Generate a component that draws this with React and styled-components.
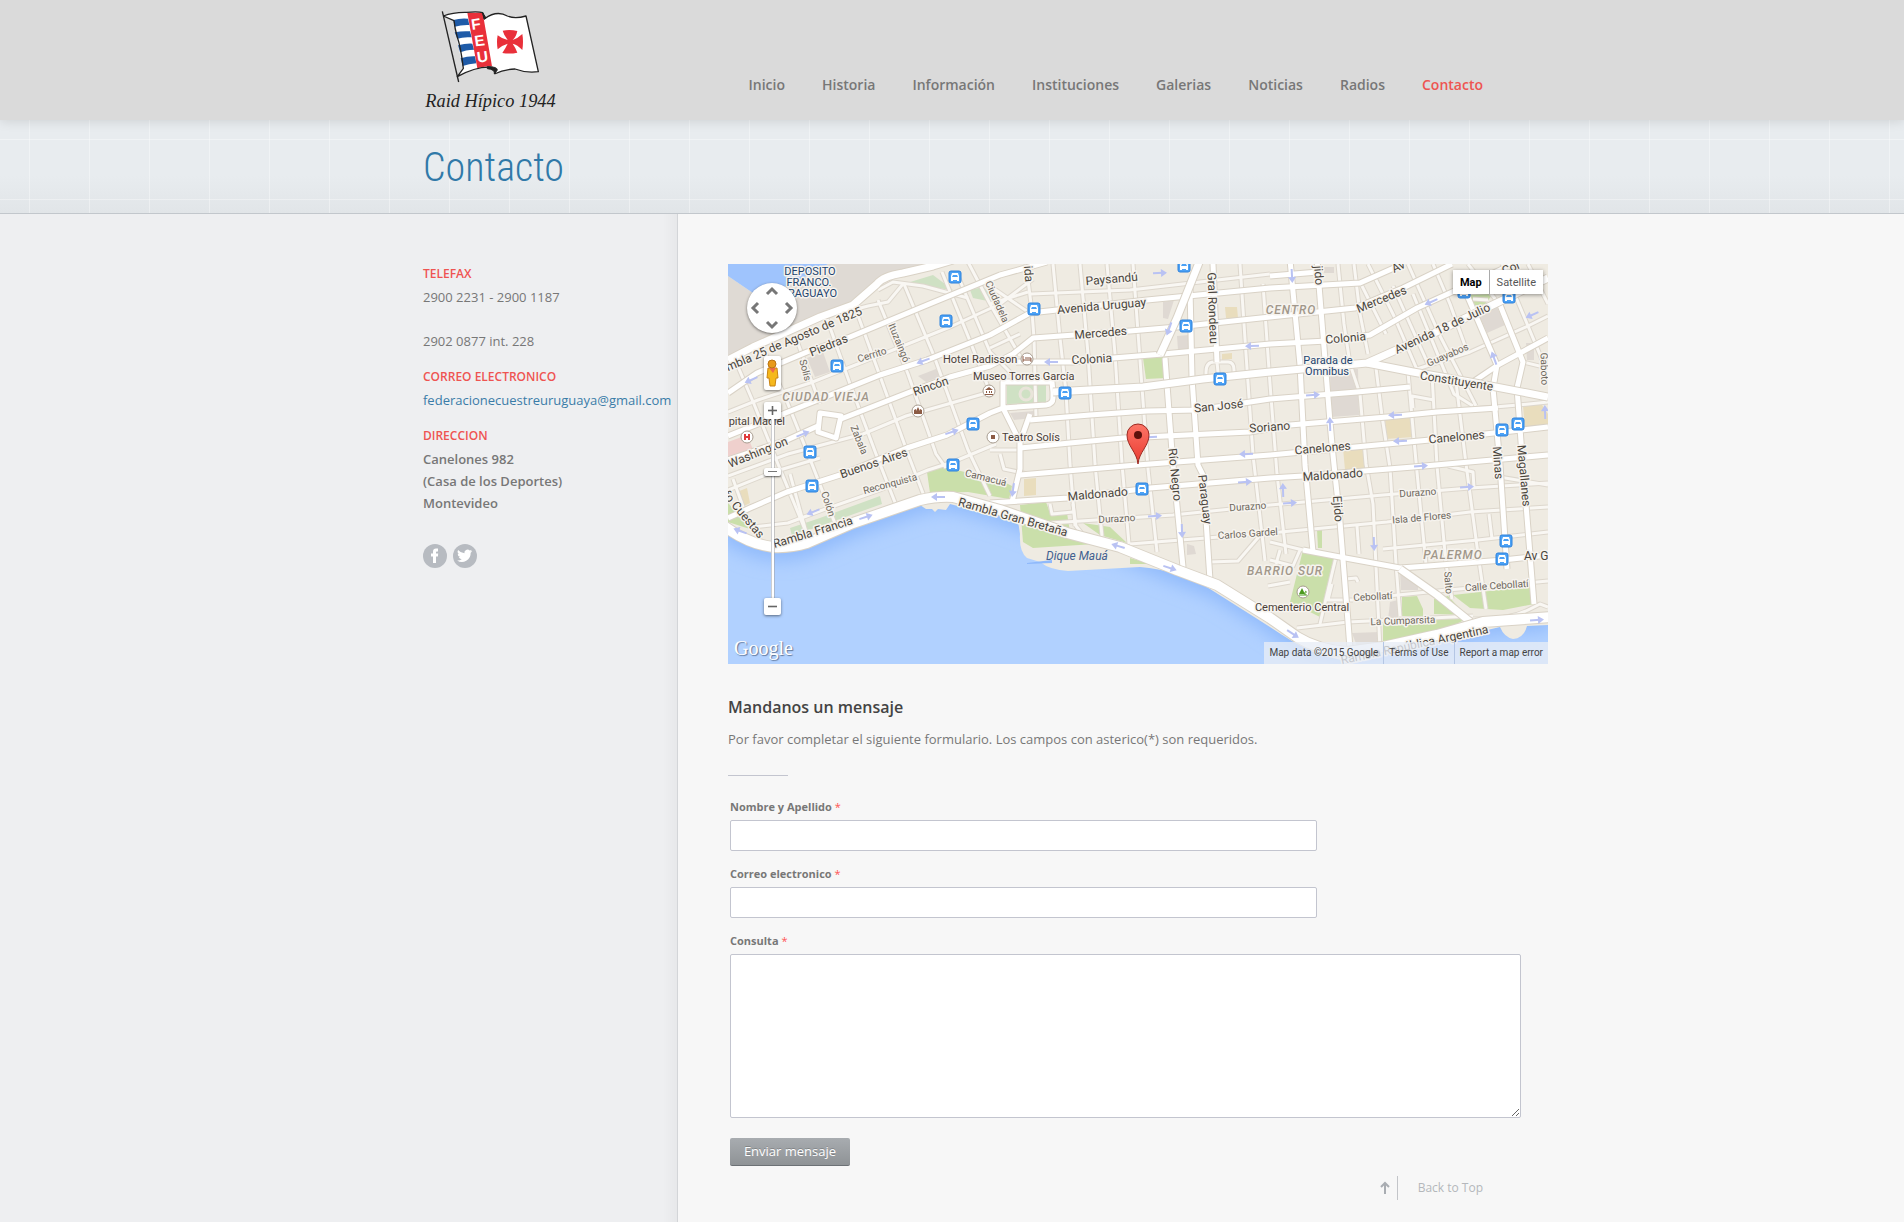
import React from "react";
import styled, { createGlobalStyle, css } from "styled-components";

const GlobalStyle = createGlobalStyle`
  * { box-sizing: border-box; }
  body {
    margin: 0;
    background: #f7f7f7;
    color: #777;
    font-family: "Open Sans", "Noto Sans", sans-serif;
    font-size: 13px;
    line-height: 22px;
  }
  a { color: inherit; text-decoration: none; }
  h1, h2, h3, p, address { margin: 0; font-style: normal; }
`;

const Page = styled.div`
  min-height: 100vh;
  display: flex;
  flex-direction: column;
`;

const Header = styled.header`
  position: relative;
  height: 120px;
  background: #dadada;
  box-shadow: 0 0 12px rgba(0, 0, 0, 0.14);
`;

const Container = styled.div`
  width: 100%;
  max-width: 1062px;
  margin: 0 auto;
  padding-left: 2px;
  display: flex;
  justify-content: space-between;
`;

const LogoLink = styled.a`
  display: block;
  padding-top: 6px;
  svg { display: block; }
`;

const Nav = styled.nav`
  display: flex;
  gap: 37px;
  padding-top: 74px;
`;

const NavLink = styled.a`
  font-size: 14px;
  font-weight: 600;
  color: ${(p) => (p.$active ? "#ee5451" : "#777")};
`;

const TitleBand = styled.section`
  height: 94px;
  border-bottom: 1px solid #c2c7cc;
  background:
    linear-gradient(90deg, rgba(255, 255, 255, 0.35) 1px, transparent 1px) 29px 0 / 60px 60px,
    linear-gradient(rgba(255, 255, 255, 0.35) 1px, transparent 1px) 0 19px / 60px 60px,
    linear-gradient(#e8ecef 60%, #e1e5e8);
`;

const PageTitle = styled.h1`
  padding-top: 23px;
  font-family: "Roboto Condensed", Roboto, sans-serif;
  font-size: 40px;
  line-height: 50px;
  font-weight: 300;
  color: #3079a8;
`;

const Columns = styled.div`
  flex: 1;
  display: grid;
  grid-template-columns: calc(50% - 274px) minmax(0, 1fr);
`;

const Sidebar = styled.aside`
  display: flex;
  justify-content: flex-end;
  padding-top: 49px;
  border-right: 1px solid #d3d5d8;
  background: linear-gradient(270deg, #e7e8ea, #eeeff1 14px);
`;

const SidebarInner = styled.div`
  width: 254px;
`;

const SideTitle = styled.h3`
  font-size: 12px;
  line-height: 22px;
  font-weight: 600;
  color: #ee5451;
  margin: 0 0 1px;
`;

const SideText = styled.p`
  margin-bottom: 14px;
  font-weight: ${(p) => (p.$strong ? 600 : 400)};
  color: ${(p) => (p.$link ? "#3a7ca8" : "#777")};
`;

const Socials = styled.div`
  display: flex;
  gap: 6px;
  padding-top: 16px;
  svg { display: block; }
`;

const Main = styled.main`
  padding: 50px 0 0 50px;
`;

const MapBox = styled.div`
  position: relative;
  width: 100%;
  max-width: 820px;
  height: 400px;
  overflow: hidden;
  font-family: Roboto, sans-serif;
`;

const MapDrawing = styled.svg`
  display: block;
  width: 100%;
  height: 100%;
  font-family: Roboto, sans-serif;
`;

const controlFace = css`
  border: 0;
  padding: 0;
  background: #fff;
  box-shadow: 0 1px 3px rgba(0, 0, 0, 0.5);
  display: grid;
  place-items: center;
`;

const MapControls = styled.div`
  position: absolute;
  top: 19px;
  left: 19px;
  width: 50px;
  display: flex;
  flex-direction: column;
  align-items: center;
`;

const PanPad = styled.div`
  ${controlFace}
  width: 50px;
  height: 50px;
  border-radius: 50%;
  grid-template-columns: repeat(3, 16px);
  grid-template-rows: repeat(3, 16px);
  place-content: center;
  margin-bottom: 23px;
`;

const PanButton = styled.button`
  grid-area: ${(p) => p.$area};
  width: 16px;
  height: 16px;
  padding: 0;
  border: 0;
  background: none;
  svg { display: block; }
`;

const Pegman = styled.button`
  ${controlFace}
  width: 17px;
  height: 34px;
  border-radius: 2px;
  margin-bottom: 12px;
`;

const ZoomButton = styled.button`
  ${controlFace}
  width: 17px;
  height: 17px;
  border-radius: 2px;
`;

const ZoomRange = styled.input`
  appearance: none;
  writing-mode: vertical-lr;
  direction: rtl;
  width: 17px;
  height: 179px;
  margin: 0;
  background: linear-gradient(90deg, transparent 7px, #9b9da3 7px, #fff 8px, #fff 10px, #9b9da3 10px, transparent 11px);
  &::-webkit-slider-thumb {
    appearance: none;
    width: 17px;
    height: 8px;
    border-radius: 2px;
    background: linear-gradient(#777, #777) center / 9px 1px no-repeat, #fff;
    box-shadow: 0 1px 2px rgba(0, 0, 0, 0.6);
  }
`;

const MapTypes = styled.div`
  position: absolute;
  top: 6px;
  right: 5px;
  display: flex;
  box-shadow: 0 1px 4px rgba(0, 0, 0, 0.4);
`;

const MapType = styled.button`
  height: 24px;
  padding: 0 7px;
  border: 0;
  border-left: ${(p) => (p.$active ? "0" : "1px solid #aaa")};
  background: #fff;
  font: ${(p) => (p.$active ? 700 : 400)} 11px Roboto, sans-serif;
  color: ${(p) => (p.$active ? "#000" : "#565656")};
`;

const Brand = styled.a`
  position: absolute;
  left: 6px;
  bottom: 3px;
  font-family: "Liberation Serif", serif;
  font-size: 20px;
  line-height: 26px;
  color: #fff;
  text-shadow: 1px 1px 1px rgba(60, 80, 110, 0.7);
`;

const Credits = styled.div`
  position: absolute;
  right: 0;
  bottom: 0;
  display: flex;
  background: rgba(232, 237, 246, 0.78);
  font-size: 10px;
  color: #444;
`;

const Credit = styled.a`
  padding: 0 5px;
  border-left: ${(p) => (p.$first ? "0" : "1px solid #b4c6e4")};
`;

const FormTitle = styled.h2`
  margin-top: 32px;
  font-size: 16px;
  line-height: 22px;
  font-weight: 600;
  color: #444;
`;

const Intro = styled.p`
  margin-top: 10px;
`;

const Rule = styled.hr`
  width: 60px;
  height: 1px;
  margin: 25px 0 21px;
  border: 0;
  background: #c3c5cf;
`;

const Form = styled.form`
  padding: 0 2px;
`;

const Field = styled.div`
  margin-bottom: 13px;
`;

const Label = styled.label`
  display: block;
  padding-bottom: 3px;
  font-size: 11px;
  line-height: 20px;
  font-weight: 700;
  span { color: #f55; font-weight: 400; }
`;

const fieldFace = css`
  display: block;
  width: 100%;
  padding: 6px 8px;
  border: 1px solid #c3c5cf;
  border-radius: 2px;
  background: #fff;
  font: inherit;
  color: #777;
`;

const Input = styled.input`
  ${fieldFace}
  max-width: 587px;
  height: 31px;
`;

const TextArea = styled.textarea`
  ${fieldFace}
  max-width: 791px;
  height: 164px;
`;

const Submit = styled.button`
  display: block;
  width: 120px;
  height: 28px;
  margin-top: 20px;
  padding: 0 0 2px;
  border: 0;
  border-bottom: 1px solid #6c7175;
  border-radius: 2px;
  background: linear-gradient(#a8acb0, #8f9396);
  color: #fff;
  font: 13px "Open Sans", sans-serif;
  text-shadow: 0 -1px 0 rgba(0, 0, 0, 0.2);
`;

const Bottom = styled.div`
  max-width: 755px;
  display: flex;
  justify-content: flex-end;
  padding-top: 10px;
`;

const BackToTop = styled.a`
  display: flex;
  align-items: center;
  font-size: 12px;
  line-height: 24px;
  color: #b4b7bb;
  span {
    margin-left: 6px;
    padding-left: 20px;
    border-left: 1px solid #c3c5c9;
  }
`;

/* ---------- map data (820 x 400 canvas) ---------- */

const GREENS = [
  "415,94 435,93 438,114 418,115",
  "742,31 765,30 757,40 745,42",
  "575,286 606,293 592,353 562,338",
  "589,266 594,266 594,284 590,284",
  "674,333 689,332 695,345 695,352 674,352",
  "655,358 740,354 709,370 655,382",
  "706,335 720,332 738,351 706,350",
  "725,331 806,322 806,340 775,346 742,344",
  "292,241 318,238 322,249 339,249 342,268 382,279 305,284 295,278",
  "355,259 382,263 399,279 372,271",
  "402,294 422,300 402,300",
  "199,208 215,203 272,216 284,222 281,235 240,228 202,229",
  "0,239 25,266 0,258",
];
const PALE_GREENS = [
  "62,264 92,254 152,232 154,240 64,272",
  "179,19 205,11 225,26 192,22",
  "242,26 255,23 274,40 245,34",
  "279,121 318,120 318,139 279,140",
];
const GREYS = [
  "79,94 95,88 102,108 87,113",
  "752,53 769,43 777,61 759,69",
  "602,106 630,105 631,151 603,153",
  "190,112 208,105 214,112 198,118",
  "435,38 446,36 440,55 435,54",
  "449,72 461,71 462,85 450,86",
  "672,308 690,320 690,326 673,326",
  "624,369 652,368 652,390 630,385",
  "282,149 306,147 306,154 286,156",
  "662,338 670,336 670,356 660,356",
  "596,3 606,3 606,9 596,9",
  "459,280 466,282 468,290 459,291",
  "798,79 806,79 806,96 799,96",
];
const TANS = [
  "657,154 683,153 685,173 658,175",
  "795,142 812,138 820,150 820,163 797,165",
  "615,184 635,183 637,205 617,206",
  "9,228 19,224 22,239 14,243",
  "497,43 509,43 510,54 498,54",
  "296,215 308,214 308,231 296,232",
  "494,90 504,89 504,95 494,96",
];

const MINOR = [
  "M0,148 L30,136 L82,119 L150,92 L222,63 L272,40 L305,15",
  "M0,212 L60,190 L135,170 L178,152 L262,128",
  "M0,226 L45,208 L92,194",
  "M25,263 L60,259 L92,247 L152,226 L200,206 L225,198 L268,180",
  "M150,26 L165,18 L195,22 L240,34",
  "M110,50 L140,42 L160,38 L175,20",
  "M8,98 L26,140 L52,205 L78,268",
  "M35,84 L58,135 L82,195 L108,262",
  "M68,74 L92,140",
  "M98,52 L122,120 L148,190 L170,246",
  "M128,46 L152,112 L180,190 L196,232",
  "M150,36 L180,110 L208,190 L218,204",
  "M176,20 L206,92 L240,186 L262,232",
  "M214,8 L240,72 L262,128",
  "M230,12 L262,88 L284,110",
  "M240,-2 L262,40 L292,92",
  "M262,22 L300,48",
  "M262,40 L300,28",
  "M262,84 L292,70",
  "M298,0 L304,48 L306,74 L308,154",
  "M5,215 L22,262",
  "M62,210 L78,268",
  "M325,0 L332,74 L338,128 L342,200 L347,262",
  "M352,0 L360,90 L367,200 L374,272",
  "M379,0 L387,90 L394,200 L401,280",
  "M405,0 L412,96 L420,205 L429,288",
  "M489,98 L491,118",
  "M512,0 L518,90 L525,191 L537,297",
  "M535,20 L542,120 L549,210 L558,290",
  "M303,30 L402,26 L542,10",
  "M322,259 L445,251 L542,241 L655,231 L742,224 L820,219",
  "M402,280 L542,269 L659,258 L742,248 L820,243",
  "M482,298 L510,297 L535,268",
  "M322,240 L324,250 L345,248",
  "M345,240 L348,262 L356,272",
  "M478,118 L478,108 Q478,98 486,98 L500,98 Q506,98 506,106 L506,112",
  "M610,0 L616,60 L622,100 L632,130 L638,200 L645,240 L652,385",
  "M626,0 L632,50 L640,90",
  "M632,18 L658,70",
  "M640,0 L666,52 L690,108",
  "M665,22 L700,100",
  "M685,30 L726,130 L745,142",
  "M680,0 L712,72 L748,142",
  "M705,0 L722,40 L740,90",
  "M648,104 L654,152 L662,204 L668,300 L672,352",
  "M680,108 L686,176 L692,240 L698,300",
  "M704,110 L709,202 L718,300 L724,335",
  "M728,118 L738,200 L750,290 L758,345",
  "M685,144 L684,132 L706,136",
  "M689,105 L742,88 L800,62 L820,52",
  "M740,0 L775,45",
  "M774,0 L800,62 L820,110",
  "M800,0 L820,40",
  "M745,35 L760,36",
  "M542,278 L575,286",
  "M542,296 L565,302 L572,286",
  "M552,286 L548,300",
  "M562,318 L540,322",
  "M608,293 L592,360",
  "M625,336 L600,336 L604,320",
  "M618,315 L628,314 L630,318",
  "M569,364 L620,358 L745,352",
  "M650,333 L720,326 L820,317",
  "M655,285 L750,276 L820,268",
  "M761,250 L764,275",
  "M745,355 Q780,356 800,346 L812,340 L820,343",
  "M629,262 L631,290",
  "M709,148 L790,141 L820,138",
  "M795,98 L820,104",
  "M720,202 L745,208 L746,224",
  "M765,212 L820,221",
  "M262,186 L292,186",
  "M272,190 L276,205 L300,210",
];

const MAJOR = [
  "M0,129 L29,109 L79,88 L122,73 L199,41 L272,11 L319,-2",
  "M0,172 L85,138 L152,111 L199,96 L262,71 L302,49 L419,36 L542,24 L632,19 L675,0",
  "M0,196 L59,176 L92,161 M113,155 L182,128 L222,113 L262,102 L285,90 L305,74 L402,67 L449,63 L542,53 L627,44 L675,24 L724,0",
  "M0,254 L22,244 L59,228 L112,211 L179,184 L219,171 L262,149 L275,144 L318,141 Q325,140 325,134 L325,128 L324,118 L275,118 L275,144",
  "M288,98 L345,98 L385,94 L435,90 L542,80 L599,77 L642,71 L689,44 L755,14 L785,0",
  "M275,144 L292,178 L292,205 L284,238",
  "M302,150 L292,178",
  "M302,156 L362,151 L419,147 L469,146 L542,135 L629,128 L682,123",
  "M292,184 L342,179 L395,174 L522,168 L562,161 L659,153 L709,148 L770,144",
  "M292,211 L409,201 L542,191 L702,176 L820,163",
  "M262,239 L292,237 L340,234 L422,224 L542,214 L575,212 L685,203 L820,191",
  "M462,24 L464,114 L470,201 L475,211 L482,316",
  "M485,0 L489,98",
  "M437,94 L445,201 L455,303",
  "M589,-4 L591,21 L602,158 L605,191 L612,258 L620,358 L622,385",
  "M562,-4 L572,101 L577,201 L585,288",
  "M739,31 L769,101 L765,124 L772,201 L779,305",
  "M772,41 L795,98 L789,124 L794,191 L806,340",
  "M742,120 L770,101 L820,74",
  "M575,286 L612,293 L672,304 L700,302 L775,296 L820,291",
  "M542,12 L590,8",
  "M92,149 L113,152 L108,174 L90,168 Z",
];

const TRUNK = [
  "M0,96 L25,83 L92,53 L125,41 L149,20 Q155,12 175,9 L205,2 L225,-4",
  "M472,-4 L449,54 L432,91",
  "M325,128 L415,123 L475,115 L542,108 L639,99 L702,71 L775,36 L820,14",
  "M639,99 L685,108 L742,118 L820,133",
  "M672,305 L709,331 L745,360",
];

const COAST_ROAD =
  "M-4,262 Q20,280 45,283 Q62,284 79,279 L125,259 L192,236 Q210,232 225,233 L272,246 L339,269 L392,283 L449,306 L489,321 L542,354 L569,373 Q590,386 619,388 L655,383 L709,371 L755,358 L824,353";

const BUS = [
  [227, 13], [218, 57], [109, 102], [245, 160], [82, 188], [225, 201], [84, 222],
  [456, 2], [306, 45], [458, 62], [337, 129], [492, 115], [736, 28], [781, 33],
  [774, 166], [790, 160], [414, 225], [778, 277], [774, 295],
];

const ARROWS = [
  [23, 116, 156], [75, 170, -22], [195, 97, 160], [224, 168, -18], [432, 9, -3],
  [441, 65, 110], [323, 98, 180], [524, 82, 178], [518, 190, 177], [422, 173, 177],
  [564, 12, 87], [703, 38, 156], [804, 51, 156], [766, 94, -110], [585, 131, -4],
  [667, 151, 177], [602, 160, -92], [672, 177, 177], [817, 148, -92], [12, 267, 200],
  [85, 248, 158], [138, 253, -18], [210, 233, 180], [285, 226, 98], [517, 218, -4],
  [427, 252, -4], [454, 267, 88], [390, 282, 197], [442, 304, 18], [555, 226, -92],
  [562, 239, -4], [693, 202, -4], [739, 223, -4], [646, 280, 88], [565, 370, 33], [809, 356, -4],
];

const STYLES = {
  street: { size: 12, fill: "#4a453c" },
  minor: { size: 10, fill: "#6d675c" },
  poi: { size: 11, fill: "#4a4038" },
  place: { size: 11, fill: "#22446f" },
  area: { size: 12, fill: "#a1978a", spacing: 1, italic: true },
  water: { size: 12, fill: "#41608f", italic: true },
};

/* text, x, y, rotation, style, anchor */
const LABELS = [
  ["DEPOSITO", 82, 11, 0, "place"],
  ["FRANCO.", 81, 22, 0, "place"],
  ["RAGUAYO", 109, 33, 0, "place", "end"],
  ["mbla 25 de Agosto de 1825", 135, 50, -23, "street", "end"],
  ["Piedras", 102, 85, -22, "street"],
  ["Cerrito", 145, 94, -18, "minor"],
  ["Ituzaingó", 168, 80, 68, "minor"],
  ["Solís", 74, 107, 75, "minor"],
  ["CIUDAD VIEJA", 98, 137, 0, "area"],
  ["Rincón", 204, 126, -19, "street"],
  ["Hotel Radisson", 215, 99, 0, "poi", "start"],
  ["Museo Torres García", 245, 116, 0, "poi", "start"],
  ["pital Maciel", 57, 161, 0, "poi", "end"],
  ["Washington", 2, 204, -22, "street", "start"],
  ["Buenos Aires", 147, 203, -19, "street"],
  ["Zabala", 128, 177, 68, "minor"],
  ["Reconquista", 163, 223, -15, "minor"],
  ["Colón", 97, 241, 72, "minor"],
  ["fo Cuestas", 31, 275, 50, "street", "end"],
  ["Rambla Francia", 86, 272, -17, "street"],
  ["Rambla Gran Bretaña", 284, 257, 16, "street"],
  ["Camacuá", 257, 217, 14, "minor"],
  ["Ciudadela", 266, 39, 66, "minor"],
  ["ida", 296, 2, 86, "street", "start"],
  ["Paysandú", 384, 19, -5, "street"],
  ["Avenida Uruguay", 374, 46, -5, "street"],
  ["Mercedes", 373, 73, -5, "street"],
  ["Colonia", 364, 99, -3, "street"],
  ["Teatro Solís", 274, 177, 0, "poi", "start"],
  ["Gral Rondeau", 482, 80, 88, "street", "end"],
  ["San José", 491, 146, -6, "street"],
  ["Soriano", 542, 167, -4, "street"],
  ["Río Negro", 443, 211, 84, "street"],
  ["Paraguay", 473, 236, 83, "street"],
  ["Maldonado", 370, 234, -5, "street"],
  ["Durazno", 389, 258, -3, "minor"],
  ["Durazno", 520, 246, -4, "minor"],
  ["Carlos Gardel", 520, 273, -4, "minor"],
  ["BARRIO SUR", 557, 311, 0, "area"],
  ["Cementerio Central", 574, 347, 0, "poi"],
  ["Dique Mauá", 349, 296, 0, "water"],
  ["jido", 586, 2, 86, "street", "start"],
  ["CENTRO", 563, 50, 0, "area"],
  ["Mercedes", 655, 39, -22, "street"],
  ["Colonia", 618, 78, -5, "street"],
  ["Av", 666, 9, -25, "street", "start"],
  ["Avenida 18 de Julio", 716, 68, -25, "street"],
  ["Col", 776, 11, -23, "street", "start"],
  ["Guayabos", 721, 94, -23, "minor"],
  ["Constituyente", 728, 121, 9, "street"],
  ["Gaboto", 813, 105, 88, "minor"],
  ["Parada de", 600, 100, 0, "place"],
  ["Omnibus", 599, 111, 0, "place"],
  ["Canelones", 729, 177, -5, "street"],
  ["Canelones", 595, 188, -5, "street"],
  ["Maldonado", 605, 215, -4, "street"],
  ["Durazno", 690, 232, -4, "minor"],
  ["Isla de Flores", 694, 257, -5, "minor"],
  ["Ejido", 606, 245, 86, "street"],
  ["Minas", 766, 199, 86, "street"],
  ["Magallanes", 792, 212, 85, "street"],
  ["PALERMO", 725, 295, 0, "area"],
  ["Av G", 796, 296, 0, "street", "start"],
  ["Salto", 717, 319, 86, "minor"],
  ["Calle Cebollatí", 769, 325, -4, "minor"],
  ["Cebollatí", 645, 336, -3, "minor"],
  ["La Cumparsita", 675, 360, -2, "minor"],
  ["Rambla República Argentina", 761, 369, -12, "street", "end"],
];

const Polys = ({ items, fill }) => items.map((p) => <polygon key={p} points={p} fill={fill} />);

const Roads = ({ items, width, fill = "#fff", edge = "#d9d2c6" }) => (
  <g fill="none" strokeLinejoin="round">
    {items.map((d) => <path key={d} d={d} stroke={edge} strokeWidth={width + 2} />)}
    {items.map((d) => <path key={d + "f"} d={d} stroke={fill} strokeWidth={width} />)}
  </g>
);

const Poi = ({ x, y, children }) => (
  <g transform={`translate(${x} ${y})`}>
    <circle r="6" fill="#fff" stroke="#a89d90" />
    {children}
  </g>
);

const CityMap = () => (
  <MapDrawing viewBox="0 0 820 400" preserveAspectRatio="xMidYMid slice" role="img" aria-label="Mapa de Montevideo">
    <defs>
      <filter id="shore" x="-10%" y="-10%" width="120%" height="120%">
        <feGaussianBlur stdDeviation="9" />
      </filter>
      <linearGradient id="pin" x1="0" y1="0" x2="0" y2="1">
        <stop offset="0" stopColor="#fd7567" />
        <stop offset="1" stopColor="#e93a30" />
      </linearGradient>
    </defs>
    <rect width="820" height="400" fill="#b1d1ff" />
    <path d={COAST_ROAD} fill="none" stroke="#8fb9fb" strokeWidth="26" filter="url(#shore)" />
    <path
      fill="#efebe2"
      d="M0,0 L820,0 L820,361 L799,362 Q796,374 785,375 Q776,373 772,363 L709,378 L652,392 Q629,402 605,394 Q585,392 542,363 L482,325 Q449,306 412,303 L340,307 Q322,306 312,298 L299,294 Q291,288 292,270 L290,257 Q272,249 245,246 L222,240 L218,246 L210,245 L207,248 L204,245 L198,245 L192,241 L159,249 L125,263 L78,283 Q52,291 22,282 L0,271 Z"
    />
    <path d="M299,299 L324,296 L324,299 L299,300 Z" fill="#8fb9fb" />
    <path d="M0,12 L25,29 L60,22 L100,0 L220,0 L175,9 L149,22 L129,43 L0,94 Z" fill="#dfdad4" />
    <path d="M0,0 L0,12 L25,29 L60,22 L100,0 Z" fill="#9fc4fd" />
    <Polys items={GREENS} fill="#cadfaa" />
    <Polys items={PALE_GREENS} fill="#cfe1c4" />
    <Polys items={GREYS} fill="#dfd9d3" />
    <Polys items={TANS} fill="#e9ddbd" />
    <polygon points="0,178 19,171 26,188 0,194" fill="#efd0cd" />
    <Roads items={MINOR} width={3} fill="#f9f7f3" edge="#ddd7cd" />
    <Roads items={MAJOR} width={5} />
    <Roads items={TRUNK} width={7} />
    <Roads items={[COAST_ROAD]} width={10} />
    <circle cx="298" cy="130" r="6" fill="none" stroke="#e9e4da" strokeWidth="3" />
    <g fill="none" stroke="#b9c2f3" strokeWidth="2">
      {ARROWS.map(([x, y, r]) => (
        <g key={`${x}-${y}`} transform={`translate(${x} ${y}) rotate(${r})`}>
          <path d="M-7,0 H3" />
          <path d="M1,-4 L7,0 L1,4 Z" fill="#b9c2f3" stroke="none" />
        </g>
      ))}
    </g>
    {BUS.map(([x, y]) => (
      <g key={`${x}-${y}`} transform={`translate(${x} ${y})`}>
        <rect x="-6" y="-6" width="12" height="12" rx="2" fill="#4ba1f5" stroke="#2f82dc" />
        <path d="M-3,-4 H3 L4,-1 V4 H2 V3 H-2 V4 H-4 V-1 Z" fill="#fff" />
        <path d="M-2,-2 H2 L3,0 H-3 Z" fill="#4ba1f5" />
      </g>
    ))}
    <Poi x={190} y={147}><path d="M-4,3 V-1 L-2,-2 V0 L0,-4 L2,0 V-2 L4,-1 V3 Z" fill="#8c5b44" /></Poi>
    <Poi x={261} y={127}><path d="M-4,-1 L0,-4 L4,-1 Z M-3,0 H-2 V2 H-3 Z M0,0 H1 V2 H0 Z M2,0 H3 V2 H2 Z M-4,3 H4 V4 H-4 Z" fill="#8c5b44" /></Poi>
    <Poi x={265} y={173}><rect x="-2" y="-2" width="4" height="4" fill="#8c5b44" /></Poi>
    <Poi x={299} y={95}><path d="M-4,-3 V3 M-4,1 H4 V3 M-2,-1 H4 V1" fill="none" stroke="#8c5b44" /></Poi>
    <Poi x={19} y={173}><path d="M-2,-3 V3 M2,-3 V3 M-2,0 H2" fill="none" stroke="#e03c3c" strokeWidth="2" /></Poi>
    <Poi x={575} y={328}><path d="M-4,3 H4 M2,3 V0" stroke="#4b9a1e" /><path d="M-1,-4 L2,2 H-4 Z M2,-1 a1,1 0 1 1 1,2 Z" fill="#4b9a1e" /></Poi>
    {LABELS.map(([text, x, y, r, kind, anchor = "middle"]) => {
      const s = STYLES[kind];
      return (
        <text
          key={`${text}-${x}`}
          transform={`translate(${x} ${y}) rotate(${r})`}
          textAnchor={anchor}
          fontSize={s.size}
          fill={s.fill}
          fontStyle={s.italic ? "italic" : "normal"}
          fontWeight={kind === "area" ? 500 : 400}
          letterSpacing={s.spacing || 0}
          stroke={kind === "water" ? "none" : "#f6f3ee"}
          strokeWidth="3"
          strokeLinejoin="round"
          paintOrder="stroke"
        >
          {text}
        </text>
      );
    })}
    <path d="M410,200 C409,188 399,182 399,171 A11,11 0 0 1 421,171 C421,182 411,188 410,200 Z" fill="url(#pin)" stroke="#9c2a22" />
    <circle cx="410" cy="171" r="4" fill="#5c110c" />
  </MapDrawing>
);

const Chevron = ({ turn }) => (
  <svg width="16" height="16" viewBox="0 0 16 16" aria-hidden="true">
    <path d="M3,10 L8,5 L13,10" transform={`rotate(${turn} 8 8)`} fill="none" stroke="#777" strokeWidth="3" />
  </svg>
);

const PANS = [
  ["Arriba", "1 / 2", 0],
  ["Izquierda", "2 / 1", -90],
  ["Derecha", "2 / 3", 90],
  ["Abajo", "3 / 2", 180],
];

const Logo = () => (
  <svg width="140" height="112" viewBox="69 18 420 336" role="img" aria-label="Raid Hípico 1944">
    <path d="M130,48 Q160,36 200,37 Q235,34 248,38 L254,56 Q290,30 322,48 Q345,58 378,48 L415,215 Q380,220 345,207 Q310,208 283,222 Q288,212 292,206 Q230,196 172,230 L190,198 Q176,160 163,62 Z" fill="#fff" />
    <g fill="#1f5ba8">
      <path d="M160,60 Q180,54 204,56 L208,75 Q184,74 164,80 Z" />
      <path d="M164,97 Q188,92 210,94 L215,112 Q190,110 172,116 Z" />
      <path d="M174,136 Q196,130 217,131 L222,149 Q196,150 180,157 Z" />
      <path d="M182,175 Q204,168 225,169 L229,190 Q206,192 188,198 Z" />
    </g>
    <path d="M202,38 L248,38 L276,199 Q252,199 232,205 Z" fill="#e9303a" />
    <g fill="#fff" fontFamily='"Liberation Sans", sans-serif' fontWeight="700" fontSize="46" textAnchor="middle">
      <text transform="translate(230 88) rotate(-8)">F</text>
      <text transform="translate(241 137) rotate(-8)">E</text>
      <text transform="translate(250 186) rotate(-8)">U</text>
    </g>
    <path d="M308,92 Q330,88 352,93 Q348,112 338,120 Q352,116 367,102 Q371,125 367,150 Q352,134 338,131 Q346,142 352,158 Q330,163 307,159 Q318,142 323,131 Q305,136 293,148 Q289,125 293,106 Q308,118 323,120 Q312,106 308,92 Z" fill="#e9303a" />
    <g fill="none" stroke="#222" strokeWidth="4" strokeLinejoin="round">
      <path d="M127,34 L176,246" />
      <path d="M130,48 Q160,36 200,37 Q235,34 248,38 L254,56 Q290,30 322,48 Q345,58 378,48 L415,215 Q380,220 345,207 Q310,208 283,222" />
      <path d="M130,48 L162,62 Q164,84 172,112 Q182,140 190,205 L172,230 Q230,198 278,202" />
    </g>
    <path d="M248,38 L258,54 L252,58 Z M262,200 Q292,200 292,210 L283,222 Q286,208 262,206 Z" fill="#222" stroke="#222" strokeWidth="3" />
    <text x="76" y="320" fontFamily='"Liberation Serif", serif' fontStyle="italic" fontSize="55" fill="#222">Raid Hípico 1944</text>
  </svg>
);

const FacebookIcon = () => (
  <svg width="24" height="24" viewBox="0 0 24 24" aria-hidden="true">
    <circle cx="12" cy="12" r="12" fill="#b7bbc1" />
    <path d="M10,19 V12.500 H8 V9.500 H10 V7.800 C10,5.600 11.200,4.600 13,4.600 H15 V7.400 H13.800 C13.200,7.400 13,7.700 13,8.300 V9.500 H15.200 L14.900,12.500 H13 V19 Z" fill="#fff" />
  </svg>
);

const TwitterIcon = () => (
  <svg width="24" height="24" viewBox="0 0 24 24" aria-hidden="true">
    <circle cx="12" cy="12" r="12" fill="#b7bbc1" />
    <path transform="translate(4 4) scale(.66)" d="M23 4.600a9.400 9.400 0 0 1-2.700.7 4.700 4.700 0 0 0 2-2.600 9.400 9.400 0 0 1-3 1.100 4.700 4.700 0 0 0-8 4.300A13.300 13.300 0 0 1 1.700 3.200a4.700 4.700 0 0 0 1.500 6.300 4.700 4.700 0 0 1-2.200-.6 4.700 4.700 0 0 0 3.800 4.700 4.700 4.700 0 0 1-2.100.1 4.700 4.700 0 0 0 4.400 3.200A9.400 9.400 0 0 1 .2 18.900a13.300 13.300 0 0 0 20.500-11.800A9.500 9.500 0 0 0 23 4.600z" fill="#fff" />
  </svg>
);

const LINKS = ["Inicio", "Historia", "Información", "Instituciones", "Galerias", "Noticias", "Radios", "Contacto"];

export default function App() {
  return (
    <Page id="top">
      <GlobalStyle />
      <Header>
        <Container>
          <LogoLink href="#inicio"><Logo /></LogoLink>
          <Nav>
            {LINKS.map((name) => (
              <NavLink key={name} href="#" $active={name === "Contacto"}>{name}</NavLink>
            ))}
          </Nav>
        </Container>
      </Header>
      <TitleBand>
        <Container><PageTitle>Contacto</PageTitle></Container>
      </TitleBand>
      <Columns>
        <Sidebar>
          <SidebarInner>
            <SideTitle>TELEFAX</SideTitle>
            <SideText>2900 2231 - 2900 1187<br /><br />2902 0877 int. 228</SideText>
            <SideTitle>CORREO ELECTRONICO</SideTitle>
            <SideText $link><a href="mailto:federacionecuestreuruguaya@gmail.com">federacionecuestreuruguaya@gmail.com</a></SideText>
            <SideTitle>DIRECCION</SideTitle>
            <SideText as="address" $strong>Canelones 982<br />(Casa de los Deportes)<br />Montevideo</SideText>
            <Socials>
              <a href="#facebook" aria-label="Facebook"><FacebookIcon /></a>
              <a href="#twitter" aria-label="Twitter"><TwitterIcon /></a>
            </Socials>
          </SidebarInner>
        </Sidebar>
        <Main>
          <MapBox>
            <CityMap />
            <MapControls>
              <PanPad>
                {PANS.map(([name, area, turn]) => (
                  <PanButton key={name} type="button" aria-label={name} $area={area}><Chevron turn={turn} /></PanButton>
                ))}
              </PanPad>
              <Pegman type="button" aria-label="Street View">
                <svg width="13" height="28" viewBox="0 0 13 28" aria-hidden="true">
                  <path d="M2,9 H11 L12,19 H10 L9,27 H4 L3,19 H1 Z" fill="#f5b81c" stroke="#c98312" />
                  <path d="M3,9 H10 L7,14 Z" fill="#ee6a4c" />
                  <circle cx="6" cy="5" r="4" fill="#e89a1a" stroke="#b87414" />
                </svg>
              </Pegman>
              <ZoomButton type="button" aria-label="Acercar">
                <svg width="9" height="9" viewBox="0 0 9 9"><path d="M0,4 H9 V5 H0 Z M4,0 H5 V9 H4 Z" fill="#666" stroke="#666" strokeWidth=".6" /></svg>
              </ZoomButton>
              <ZoomRange type="range" min="0" max="21" defaultValue="15" aria-label="Zoom" />
              <ZoomButton type="button" aria-label="Alejar">
                <svg width="9" height="9" viewBox="0 0 9 9"><path d="M0,4 H9 V5 H0 Z" fill="#666" stroke="#666" strokeWidth=".6" /></svg>
              </ZoomButton>
            </MapControls>
            <MapTypes>
              <MapType type="button" $active>Map</MapType>
              <MapType type="button">Satellite</MapType>
            </MapTypes>
            <Brand href="#google">Google</Brand>
            <Credits>
              <Credit as="span" $first>Map data ©2015 Google</Credit>
              <Credit href="#terms">Terms of Use</Credit>
              <Credit href="#report">Report a map error</Credit>
            </Credits>
          </MapBox>
          <FormTitle>Mandanos un mensaje</FormTitle>
          <Intro>Por favor completar el siguiente formulario. Los campos con asterico(*) son requeridos.</Intro>
          <Rule />
          <Form onSubmit={(e) => e.preventDefault()}>
            <Field>
              <Label htmlFor="nombre">Nombre y Apellido <span>*</span></Label>
              <Input id="nombre" type="text" />
            </Field>
            <Field>
              <Label htmlFor="correo">Correo electronico <span>*</span></Label>
              <Input id="correo" type="email" />
            </Field>
            <Label htmlFor="consulta">Consulta <span>*</span></Label>
            <TextArea id="consulta" />
            <Submit type="submit">Enviar mensaje</Submit>
          </Form>
          <Bottom>
            <BackToTop href="#top">
              <svg width="12" height="14" viewBox="0 0 12 14" aria-hidden="true">
                <path d="M6,13 V2 M2,6 L6,2 L10,6" fill="none" stroke="#a9adb2" strokeWidth="2" />
              </svg>
              <span>Back to Top</span>
            </BackToTop>
          </Bottom>
        </Main>
      </Columns>
    </Page>
  );
}
